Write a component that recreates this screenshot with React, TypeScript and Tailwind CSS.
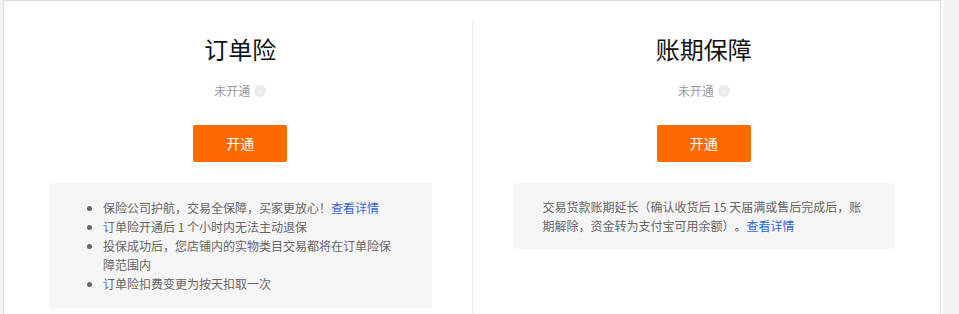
import React from "react";

const font = { fontFamily: '"Noto Sans CJK SC", "Noto Sans", sans-serif' };

function StatusIcon() {
  return (
    <svg width="12" height="12" viewBox="0 0 12 12" className="ml-[4px]">
      <circle cx="6" cy="6" r="6" fill="#ebebeb" />
      <path d="M3.4 6.1 L5.2 7.8 L8.6 4.4" fill="none" stroke="#f8f8f8" strokeWidth="1" />
    </svg>
  );
}

function Column({
  title,
  children,
  divider,
  boxClass,
}: {
  title: string;
  children: React.ReactNode;
  divider?: boolean;
  boxClass: string;
}) {
  return (
    <div
      className={
        "flex-1 flex flex-col items-center px-[40px] pt-[10px] " +
        (divider ? "border-r border-[#ececec]" : "")
      }
    >
      <div className="text-[24px] leading-[36px] text-[#111]">{title}</div>
      <div className="mt-[15px] flex items-center h-[18px] text-[12px] leading-[18px] text-[#999]">
        <span>未开通</span>
        <StatusIcon />
      </div>
      <button className="mt-[25px] w-[94px] h-[37px] rounded-[2px] bg-[#ff6a00] text-white text-[14px] leading-[37px]">
        开通
      </button>
      <div className={"mt-[21px] w-full bg-[#f5f5f5] text-[12px] leading-[19px] text-[#666] " + boxClass}>
        {children}
      </div>
    </div>
  );
}

export default function App() {
  return (
    <div className="min-h-screen bg-[#f3f3f3] pl-[3px] [text-spacing-trim:space-all]" style={font}>
      <div className="w-[940px] bg-white pr-[2px]">
        <div className="w-[938px] min-h-[330px] border-l border-t border-r border-[#dcdcdc] bg-white pt-[20px] px-[5px] flex">
          <Column title="订单险" divider boxClass="pt-[15px] pb-[15px] pl-[40px] pr-[40px]">
            <ul className="list-disc pl-[14px]">
              <li>
                保险公司护航，交易全保障，买家更放心！<a className="text-[#2f67d6]">查看详情</a>
              </li>
              <li>订单险开通后 1 个小时内无法主动退保</li>
              <li>投保成功后，您店铺内的实物类目交易都将在订单险保障范围内</li>
              <li>订单险扣费变更为按天扣取一次</li>
            </ul>
          </Column>
          <Column title="账期保障" boxClass="pt-[14px] pb-[14px] px-[30px]">
            <p>
              交易货款账期延长（确认收货后 15 天届满或售后完成后，账期解除，资金转为支付宝可用余额）。
              <a className="text-[#2f67d6]">查看详情</a>
            </p>
          </Column>
        </div>
      </div>
    </div>
  );
}
